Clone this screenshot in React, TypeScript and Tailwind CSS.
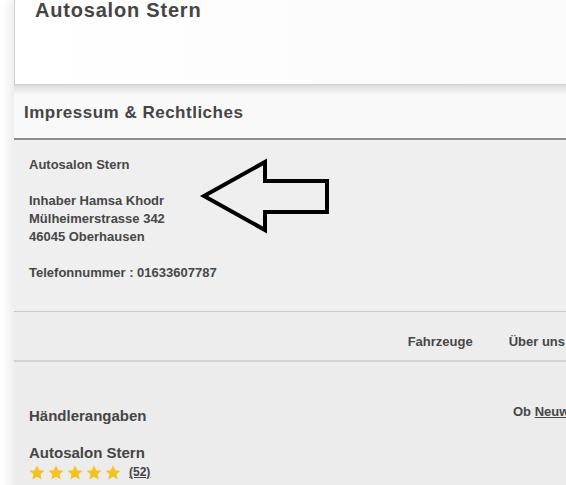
import React from "react";

function Star() {
  return (
    <svg width="16" height="15" viewBox="0 0 24 23" className="block">
      <path
        d="M12 0.5l3.4 7.5 8.1 0.8-6.1 5.4 1.8 8L12 18.1l-7.2 4.1 1.8-8-6.1-5.4 8.1-0.8z"
        fill="#f7c21b"
      />
    </svg>
  );
}

export default function App() {
  return (
    <div className="relative w-[566px] h-[485px] overflow-hidden bg-white font-['Liberation_Sans',Arial,sans-serif] text-[#444]">
      <div className="ml-[14px] shadow-[-5px_0_9px_rgba(0,0,0,0.08)]">
        {/* top card */}
        <div className="h-[85px] bg-gradient-to-r from-white to-[#fafafa] border-l border-b border-[#cfcfcf] pl-[20px]">
          <div className="text-[20px] leading-[20px] font-bold tracking-[0.8px] text-[#454545]">
            Autosalon Stern
          </div>
        </div>
        {/* header */}
        <div className="relative h-[55px] bg-[#f9f9f9] border-b-2 border-[#8c8c8c] flex items-center pl-[10px] pt-[3px]">
          <div className="absolute left-0 right-0 top-0 h-[10px] bg-gradient-to-b from-[#dcdcdc] to-transparent" />
          <div className="relative text-[17px] font-bold tracking-[0.5px] text-[#454545]">
            Impressum &amp; Rechtliches
          </div>
        </div>
        {/* content */}
        <div className="bg-[#efefef] border-b border-[#c9c9c9] pl-[15px] pt-[16px] pb-[29px] text-[13px] leading-[18px] font-bold text-[#474747]">
          <div>Autosalon Stern</div>
          <div>&nbsp;</div>
          <div>Inhaber Hamsa Khodr</div>
          <div>Mülheimerstrasse 342</div>
          <div>46045 Oberhausen</div>
          <div>&nbsp;</div>
          <div>Telefonnummer : 01633607787</div>
        </div>
        {/* nav */}
        <div className="h-[50px] bg-[#ededed] border-b-2 border-[#d2d2d2] flex justify-end items-center pt-[11px] text-[13px] font-bold text-[#474747] whitespace-nowrap">
          <div className="flex gap-[36px] mr-[1px]">
            <span>Fahrzeuge</span>
            <span>Über uns</span>
          </div>
        </div>
        {/* bottom */}
        <div className="h-[200px] bg-[#ececec] pl-[15px] pt-[45px] flex">
          <div className="flex-1">
            <div className="text-[15px] leading-[18px] font-bold text-[#454545]">Händlerangaben</div>
            <div className="mt-[19px] text-[15px] leading-[18px] font-bold text-[#454545]">Autosalon Stern</div>
            <div className="flex items-center mt-[1px]">
              <div className="flex gap-[3px]">
                <Star />
                <Star />
                <Star />
                <Star />
                <Star />
              </div>
              <span className="ml-[8px] text-[12px] font-bold underline text-[#444]">(52)</span>
            </div>
          </div>
          <div className="w-[53px] -mt-[4px] text-[13px] leading-[18px] font-bold text-[#474747] whitespace-nowrap overflow-hidden">
            Ob <span className="underline">Neuw</span>
          </div>
        </div>
      </div>
      {/* hand-drawn arrow annotation */}
      <svg
        className="absolute left-0 top-0 pointer-events-none"
        width="566"
        height="485"
        viewBox="0 0 566 485"
      >
        <polygon
          points="204,196 265,162 265,181 327,181 327,212 265,212 265,230"
          fill="none"
          stroke="#000"
          strokeWidth="4"
          strokeLinejoin="miter"
        />
      </svg>
    </div>
  );
}
